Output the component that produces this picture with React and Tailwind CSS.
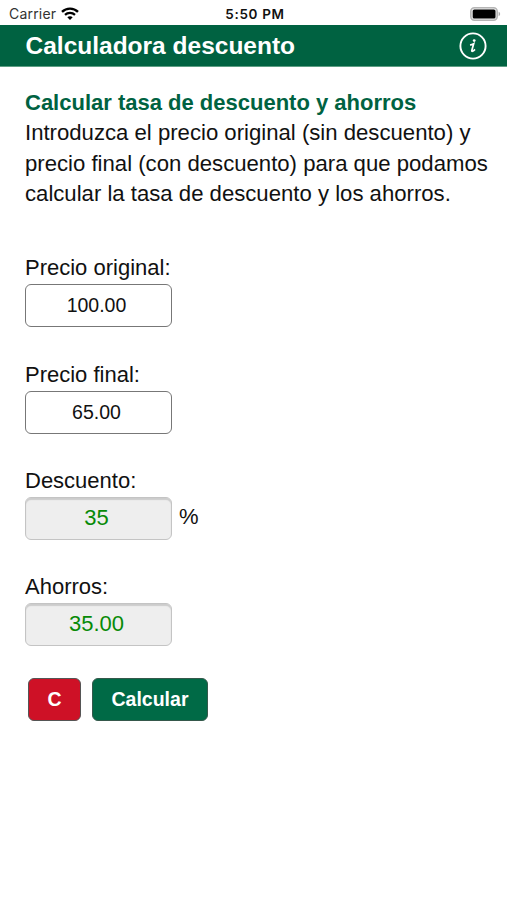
import { useState } from "react";

function Wifi() {
  return (
    <svg viewBox="0 0 18 13" className="ml-[5px] h-[13px] w-[18px]" fill="none" stroke="#000">
      <path d="M1 4.8C5.4 .5 12.6 .5 17 4.8" strokeWidth="2.4" />
      <path d="M4 7.9C6.8 5.2 11.2 5.2 14 7.9" strokeWidth="2.2" />
      <path d="M9 13 6.3 10.2C7.8 8.8 10.2 8.8 11.7 10.2Z" fill="#000" stroke="none" />
    </svg>
  );
}

function Battery() {
  return (
    <svg viewBox="0 0 31 14" className="h-[14px] w-[31px]">
      <rect x=".8" y=".8" width="26.4" height="12.4" rx="3.6" fill="#eee" stroke="#b5b5b5" strokeWidth="1.6" />
      <rect x="2.7" y="2.4" width="22.8" height="9.2" rx="1.6" fill="#000" />
      <path d="M28.6 4.8C30.6 5.5 30.6 8.5 28.6 9.2Z" fill="#aaa" />
    </svg>
  );
}

function Label({ children }) {
  return <label className="block h-8 text-[22px] leading-8">{children}</label>;
}

const inputBase = "h-[43px] w-[147px] rounded-[6px] border pr-1 text-center outline-none";

export default function App() {
  const [original, setOriginal] = useState("100.00");
  const [final, setFinal] = useState("65.00");
  const [discount, setDiscount] = useState("35");
  const [savings, setSavings] = useState("35.00");

  const calculate = () => {
    const saved = Number(original) - Number(final);
    setSavings(saved.toFixed(2));
    setDiscount(String(Math.round((saved / Number(original)) * 10000) / 100));
  };

  const clear = () => {
    setOriginal("");
    setFinal("");
    setDiscount("");
    setSavings("");
  };

  return (
    <div className="h-[900px] w-[507px] overflow-hidden bg-white font-['Liberation_Sans',Arial,sans-serif] text-[#111]">
      {/* Status bar */}
      <div className="grid h-[25px] grid-cols-3 items-center pt-[2px] pr-[6px] pl-[9px] font-['Inter',sans-serif] text-[13.5px]">
        <div className="flex items-center text-[#333]">
          <span className="text-[14px] tracking-[0.2px]">Carrier</span>
          <Wifi />
        </div>
        <span className="pt-px text-center text-[13.5px] font-semibold tracking-[0.65px]">5:50 PM</span>
        <div className="flex justify-end">
          <Battery />
        </div>
      </div>

      {/* Header */}
      <header className="flex h-[42px] items-center justify-between border-b border-[#5d9d83] bg-[#006241] pr-5 pl-[25.5px] text-white">
        <h1 className="pt-[2px] text-[24.5px] font-bold">Calculadora descuento</h1>
        <svg viewBox="0 0 28 28" className="h-7 w-7" fill="none" stroke="#fff">
          <circle cx="14" cy="14" r="12.6" strokeWidth="1.9" />
          <circle cx="15.2" cy="8.6" r="1.4" fill="#fff" stroke="none" />
          <path d="M11 13C12.4 12.8 13.4 12.4 14.7 11.7L12.8 18.4C12.6 19.8 13.8 19.6 16 17.4" strokeWidth="1.7" />
        </svg>
      </header>

      <main className="pt-[20.5px] pl-[25px]">
        <h2 className="text-[22px] leading-[30.6px] font-bold whitespace-nowrap text-[#006241]">
          Calcular tasa de descuento y ahorros
        </h2>
        <p className="text-[22.15px] leading-[30.6px] whitespace-nowrap">
          Introduzca el precio original (sin descuento) y
          <br />
          precio final (con descuento) para que podamos
          <br />
          calcular la tasa de descuento y los ahorros.
        </p>

        <div className="mt-[42.5px] flex flex-col gap-[31.3px]">
          <div>
            <Label>Precio original:</Label>
            <input
              className={`${inputBase} block border-[#777] bg-white text-[19.5px]`}
              value={original}
              onChange={(e) => setOriginal(e.target.value)}
            />
          </div>
          <div>
            <Label>Precio final:</Label>
            <input
              className={`${inputBase} block border-[#777] bg-white text-[19.5px]`}
              value={final}
              onChange={(e) => setFinal(e.target.value)}
            />
          </div>
          <div>
            <Label>Descuento:</Label>
            <div className="flex items-center">
              <input
                className={`${inputBase} border-[#c4c4c4] bg-[#eee] text-[22px] text-[#078a07] shadow-[inset_0_2px_1px_#ccc]`}
                value={discount}
                readOnly
              />
              <span className="ml-[7px] pb-[3px] text-[22px]">%</span>
            </div>
          </div>
          <div>
            <Label>Ahorros:</Label>
            <input
              className={`${inputBase} block border-[#c4c4c4] bg-[#eee] pb-[2px] text-[22px] text-[#078a07] shadow-[inset_0_2px_1px_#ccc]`}
              value={savings}
              readOnly
            />
          </div>
        </div>

        <div className="mt-[31.5px] ml-[3px] flex gap-[11px] text-[19.5px] font-bold text-white">
          <button onClick={clear} className="h-[43px] w-[53px] rounded-[6px] border border-[#555] bg-[#ce1126] pt-px">
            C
          </button>
          <button onClick={calculate} className="h-[43px] w-[116px] rounded-[6px] border border-[#35584b] bg-[#006a46] pt-px">
            Calcular
          </button>
        </div>
      </main>
    </div>
  );
}
